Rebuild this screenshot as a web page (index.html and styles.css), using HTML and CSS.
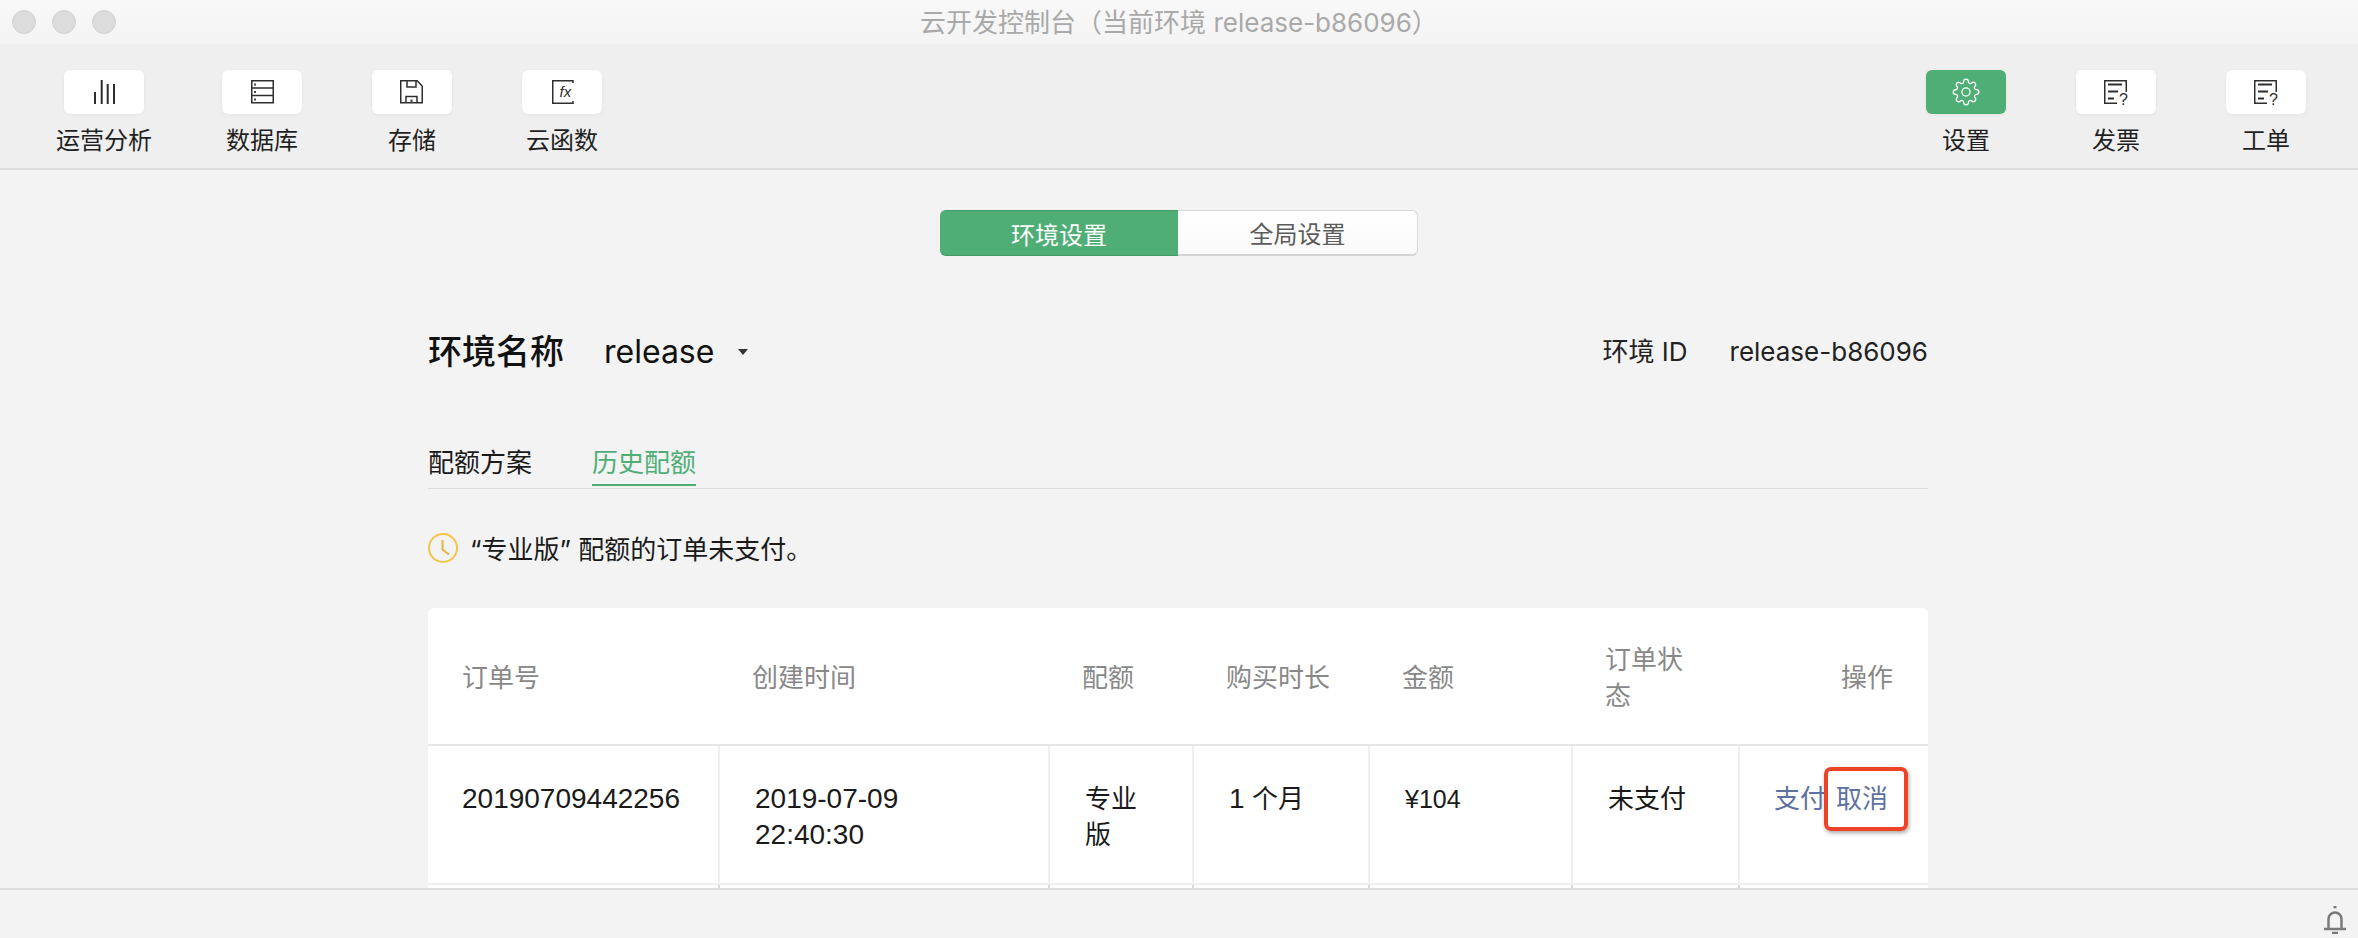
FILE: index.html
```html
<!DOCTYPE html>
<html lang="zh-CN">
<head>
<meta charset="utf-8">
<title>云开发控制台</title>
<link rel="stylesheet" href="styles.css">
</head>
<body>
<header class="titlebar">
  <div class="lights"><span class="light"></span><span class="light"></span><span class="light"></span></div>
  <div class="window-title">云开发控制台（当前环境 release-b86096）</div>
</header>
<nav class="toolbar">
  <div class="tool-group">
    <div class="tool">
      <div class="tool-btn"><svg class="icon" viewBox="0 0 28 28"><path class="ink-2" d="M5 14v12M11.700 2v24M17.700 6v20M24 6v20"/></svg></div>
      <div class="tool-label">运营分析</div>
    </div>
    <div class="tool">
      <div class="tool-btn"><svg class="icon" viewBox="0 0 28 28"><path class="ink" d="M3.750 2.750h21.500v22H3.750zM3.750 10h21.500M3.750 17.500h21.500"/><path class="dots" d="M6 5.500h2v2H6zM6 13h2v2H6zM6 20.500h2v2H6z"/></svg></div>
      <div class="tool-label">数据库</div>
    </div>
    <div class="tool">
      <div class="tool-btn"><svg class="icon" viewBox="0 0 28 28"><path class="ink" d="M2.750 2.750h16.500l5 5.500v16.500H2.750zM9 3v6h9V3M8 24.500V18.500h11v6"/><path class="dots" d="M12.500 21.500h2v3h-2z"/></svg></div>
      <div class="tool-label">存储</div>
    </div>
    <div class="tool">
      <div class="tool-btn"><svg class="icon" viewBox="0 0 28 28"><path class="ink" d="M25 5V2.750H4.750v22.500H25V23"/><text class="fx" x="11.500" y="19">fx</text></svg></div>
      <div class="tool-label">云函数</div>
    </div>
  </div>
  <div class="tool-group">
    <div class="tool">
      <div class="tool-btn tool-btn-active"><svg class="icon" viewBox="0 0 24 24"><circle class="gear" cx="12" cy="12" r="3.500"/><path class="gear" d="M19.400 15a1.650 1.650 0 0 0 .33 1.820l.06.06a2 2 0 0 1 0 2.830 2 2 0 0 1-2.830 0l-.06-.06a1.650 1.650 0 0 0-1.820-.33 1.650 1.650 0 0 0-1 1.510V21a2 2 0 0 1-2 2 2 2 0 0 1-2-2v-.09A1.650 1.650 0 0 0 9 19.400a1.650 1.650 0 0 0-1.820.33l-.06.06a2 2 0 0 1-2.830 0 2 2 0 0 1 0-2.830l.06-.06a1.650 1.650 0 0 0 .33-1.820 1.650 1.650 0 0 0-1.510-1H3a2 2 0 0 1-2-2 2 2 0 0 1 2-2h.09A1.650 1.650 0 0 0 4.600 9a1.650 1.650 0 0 0-.33-1.820l-.06-.06a2 2 0 0 1 0-2.830 2 2 0 0 1 2.830 0l.06.06a1.650 1.650 0 0 0 1.820.33H9a1.650 1.650 0 0 0 1-1.510V3a2 2 0 0 1 2-2 2 2 0 0 1 2 2v.09a1.650 1.650 0 0 0 1 1.510 1.650 1.650 0 0 0 1.820-.33l.06-.06a2 2 0 0 1 2.830 0 2 2 0 0 1 0 2.830l-.06.06a1.650 1.650 0 0 0-.33 1.820V9a1.650 1.650 0 0 0 1.510 1H21a2 2 0 0 1 2 2 2 2 0 0 1-2 2h-.09a1.650 1.650 0 0 0-1.510 1z"/></svg></div>
      <div class="tool-label">设置</div>
    </div>
    <div class="tool">
      <div class="tool-btn"><svg class="icon" viewBox="0 0 28 28"><path class="ink" d="M24.250 14V2.750H2.750v22.500H15"/><path class="ink-2" d="M6 6.500h14M6 13.500h10M6 20.500h6"/><text class="qmark" x="17" y="27">?</text></svg></div>
      <div class="tool-label">发票</div>
    </div>
    <div class="tool">
      <div class="tool-btn"><svg class="icon" viewBox="0 0 28 28"><path class="ink" d="M24.250 14V2.750H2.750v22.500H15"/><path class="ink-2" d="M6 6.500h14M6 13.500h10M6 20.500h6"/><text class="qmark" x="17" y="27">?</text></svg></div>
      <div class="tool-label">工单</div>
    </div>
  </div>
</nav>
<main class="main">
  <div class="segmented">
    <div class="seg seg-on">环境设置</div>
    <div class="seg seg-off">全局设置</div>
  </div>
  <section class="content">
    <div class="env-row">
      <div class="env-name">
        <span class="env-title">环境名称</span>
        <span class="env-value">release</span>
        <span class="caret"></span>
      </div>
      <div class="env-id"><span class="env-id-label">环境 ID</span><span>release-b86096</span></div>
    </div>
    <div class="tabs">
      <div class="tab">配额方案</div>
      <div class="tab tab-on">历史配额</div>
    </div>
    <div class="notice">
      <svg class="clock" viewBox="0 0 30 30"><circle cx="15" cy="15" r="14"/><path d="M14.500 7v9.500L21 21.500"/></svg>
      <span class="notice-text">“专业版” 配额的订单未支付。</span>
    </div>
    <div class="card">
      <table class="orders">
        <colgroup>
          <col class="c1"><col class="c2"><col class="c3"><col class="c4"><col class="c5"><col class="c6"><col class="c7">
        </colgroup>
        <thead>
          <tr>
            <th>订单号</th><th>创建时间</th><th>配额</th><th>购买时长</th><th>金额</th><th>订单状态</th><th class="th-op">操作</th>
          </tr>
        </thead>
        <tbody>
          <tr class="row">
            <td><span class="num">20190709442256</span></td>
            <td><span class="num">2019-07-09<br>22:40:30</span></td>
            <td>专业版</td>
            <td><span class="num">1</span> 个月</td>
            <td><span class="num num-price">¥104</span></td>
            <td>未支付</td>
            <td class="td-op"><span class="op">支付</span><span class="op op-marked">取消<span class="mark"></span></span></td>
          </tr>
          <tr class="row-next"><td></td><td></td><td></td><td></td><td></td><td></td><td></td></tr>
        </tbody>
      </table>
    </div>
  </section>
</main>
<footer class="statusbar">
  <svg class="bell" viewBox="0 0 22 28"><path d="M4.500 23V13a6.500 6.500 0 0 1 13 0v10M0 23h22"/><path d="M9.500 1h3M8 27h6"/></svg>
</footer>
</body>
</html>
```

FILE: styles.css
```css
* { box-sizing: border-box; }
html, body { height: 100%; }
body {
  margin: 0;
  height: 100vh;
  display: flex;
  flex-direction: column;
  overflow: hidden;
  background: #f3f3f3;
  color: #1a1a1a;
  font-family: Inter, "Noto Sans CJK SC", sans-serif;
  font-size: 26px;
}
.titlebar {
  position: relative;
  flex: 0 0 44px;
  display: flex;
  align-items: center;
  justify-content: center;
  background: linear-gradient(#f8f8f8, #f4f4f4);
}
.lights {
  position: absolute;
  left: 12px;
  top: 10px;
  display: flex;
  gap: 16px;
}
.light {
  width: 24px;
  height: 24px;
  border-radius: 50%;
  background: #dcdcdc;
  border: 1px solid #d2d2d2;
}
.window-title {
  height: 44px;
  padding-top: 2px;
  font-size: 26px;
  line-height: 42px;
  color: #a9a9a9;
}
.toolbar {
  flex: 0 0 126px;
  display: flex;
  justify-content: space-between;
  padding: 26px 52px 0 56px;
  background: #efefef;
  border-bottom: 2px solid #dcdcdc;
}
.tool-group { display: flex; gap: 70px; }
.tool {
  display: flex;
  flex-direction: column;
  align-items: center;
  min-width: 80px;
}
.tool-btn {
  width: 80px;
  height: 44px;
  display: flex;
  align-items: center;
  justify-content: center;
  background: #fff;
  border-radius: 6px;
  box-shadow: 0 1px 4px rgba(0, 0, 0, .05);
}
.tool-btn-active { background: #4fae76; }
.icon { width: 28px; height: 28px; overflow: visible; }
.ink { fill: none; stroke: #2e2e2e; stroke-width: 1.500; }
.ink-2 { fill: none; stroke: #2e2e2e; stroke-width: 2; }
.dots { fill: #444; }
.gear { fill: none; stroke: #fff; stroke-width: 1.100; }
.fx {
  font-family: "Liberation Sans", sans-serif;
  font-style: italic;
  font-size: 15px;
  fill: #2e2e2e;
}
.qmark {
  font-family: "Liberation Sans", sans-serif;
  font-size: 16px;
  fill: #2e2e2e;
}
.tool-label {
  margin-top: 12px;
  font-size: 24px;
  line-height: 30px;
  white-space: nowrap;
  color: #1f1f1f;
}
.main {
  flex: 1 1 auto;
  min-height: 0;
  overflow: hidden;
  padding-top: 40px;
}
.segmented {
  width: 478px;
  height: 46px;
  margin: 0 auto;
  display: flex;
  font-size: 24px;
}
.seg {
  display: flex;
  align-items: center;
  justify-content: center;
}
.seg-on {
  width: 238px;
  background: #4fae76;
  color: #fff;
  border-radius: 6px 0 0 6px;
  border-top: 1px solid #449a67;
  border-bottom: 1px solid #449a67;
}
.seg-off {
  width: 240px;
  color: #5c5c5c;
  background: linear-gradient(#fff, #fafafa);
  border: 1px solid #dadada;
  border-left: 0;
  border-bottom: 2px solid #d4d4d4;
  border-radius: 0 6px 6px 0;
}
.content { width: 1500px; margin-left: 428px; }
.env-row {
  margin-top: 68px;
  height: 50px;
  padding-top: 6px;
  display: flex;
  align-items: center;
  justify-content: space-between;
}
.env-name { display: flex; align-items: center; }
.env-title { font-size: 34px; line-height: 50px; font-weight: 500; color: #111; }
.env-value {
  margin-left: 40px;
  font-size: 32px;
  line-height: 50px;
  color: #111;
}
.caret {
  margin-left: 24px;
  width: 0;
  height: 0;
  border-left: 5px solid transparent;
  border-right: 5px solid transparent;
  border-top: 6px solid #333;
}
.env-id {
  display: flex;
  align-items: baseline;
  font-size: 26px;
  line-height: 36px;
  color: #222;
}
.env-id-label { margin-right: 42px; }
.tabs {
  margin-top: 69px;
  height: 46px;
  display: flex;
  gap: 60px;
  border-bottom: 1px solid #dcdcdc;
}
.tab {
  height: 44px;
  padding-top: 2px;
  line-height: 36px;
  color: #1a1a1a;
}
.tab-on {
  height: 43px;
  color: #4fae76;
  border-bottom: 2px solid #4fae76;
}
.notice {
  margin-top: 44px;
  height: 30px;
  display: flex;
  align-items: center;
}
.clock { width: 30px; height: 30px; flex: none; }
.clock circle, .clock path { fill: none; stroke: #f5c346; stroke-width: 2; }
.clock path { stroke: #e9b544; }
.notice-text { margin-left: 12px; padding-top: 4px; line-height: 36px; color: #1a1a1a; }
.card {
  margin-top: 45px;
  background: #fff;
  border-radius: 6px 6px 0 0;
  overflow: hidden;
}
.orders {
  width: 1500px;
  table-layout: fixed;
  border-collapse: separate;
  border-spacing: 0;
}
.c1 { width: 290px; }
.c2 { width: 330px; }
.c3 { width: 144px; }
.c4 { width: 176px; }
.c5 { width: 203px; }
.c6 { width: 167px; }
.c7 { width: 190px; }
.orders th {
  height: 138px;
  padding: 4px 30px 0 34px;
  font-weight: 400;
  font-size: 26px;
  line-height: 36px;
  text-align: left;
  color: #888;
  border-bottom: 2px solid #e6e6e6;
}
.orders th.th-op { text-align: right; padding-right: 35px; padding-left: 0; }
.row td {
  height: 139px;
  padding: 35px 30px 0 35px;
  vertical-align: top;
  line-height: 36px;
  color: #1a1a1a;
  border-left: 2px solid #f0f0f0;
  border-bottom: 2px solid #eee;
}
.row td:first-child { border-left: 0; padding-left: 34px; }
.row-next td {
  height: 40px;
  border-left: 2px solid #d8d8d8;
}
.row-next td:first-child { border-left: 0; }
.num {
  font-family: "Liberation Sans", sans-serif;
  font-size: 28px;
}
.num-price { font-size: 25px; }
.row td.td-op {
  padding: 35px 40px 0 0;
  text-align: right;
}
.op { color: #5f719f; }
.op-marked { position: relative; margin-left: 10px; }
.mark {
  position: absolute;
  left: -12px;
  right: -20px;
  top: -16px;
  bottom: -17px;
  border: 4px solid #ee4327;
  border-radius: 7px;
  box-shadow: 1px 2px 4px rgba(0, 0, 0, .35);
}
.statusbar {
  flex: 0 0 50px;
  display: flex;
  justify-content: flex-end;
  align-items: flex-end;
  padding: 0 12px 4px 0;
  background: #f3f3f3;
  border-top: 2px solid #dcdcdc;
}
.bell { width: 22px; height: 28px; }
.bell path { fill: none; stroke: #7a7a7a; stroke-width: 2.500; }
```
